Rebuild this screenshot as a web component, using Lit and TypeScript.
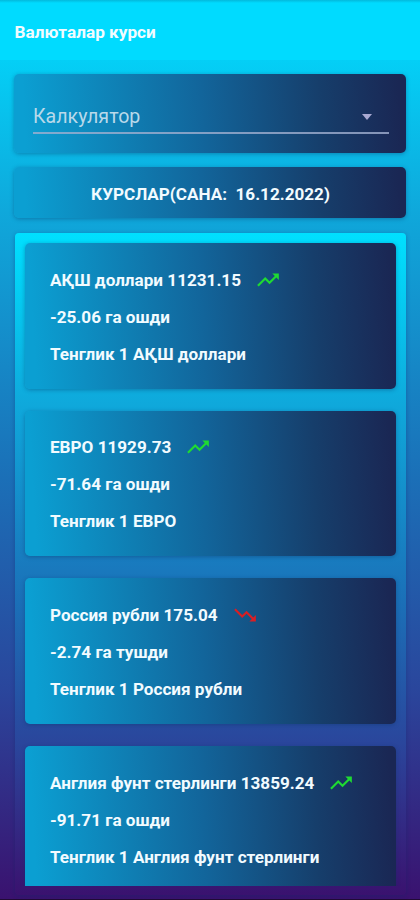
import { LitElement, html, css, svg } from "lit";
import { customElement } from "lit/decorators.js";

interface Rate {
  name: string;
  value: string;
  diff: string;
  up: boolean;
}

const RATES: Rate[] = [
  { name: "АҚШ доллари", value: "11231.15", diff: "-25.06 га ошди", up: true },
  { name: "ЕВРО", value: "11929.73", diff: "-71.64 га ошди", up: true },
  { name: "Россия рубли", value: "175.04", diff: "-2.74 га тушди", up: false },
  { name: "Англия фунт стерлинги", value: "13859.24", diff: "-91.71 га ошди", up: true },
];

const UP = svg`<path d="M16 6l2.29 2.29-4.88 4.88-4-4L2 16.59 3.41 18l6-6 4 4 6.3-6.29L22 12V6z"/>`;
const DOWN = svg`<path d="M16 18l2.29-2.29-4.88-4.88-4 4L2 7.41 3.41 6l6 6 4-4 6.3 6.29L22 12v6z"/>`;

@customElement("app-root")
export class AppRoot extends LitElement {
  static styles = css`
    :host {
      display: flex;
      flex-direction: column;
      box-sizing: border-box;
      height: 900px;
      overflow: hidden;
      font-family: Roboto, "Noto Sans", sans-serif;
      color: #f2fbff;
      background: #341263;
    }
    * { box-sizing: border-box; }
    header {
      flex: none;
      height: 60px;
      padding: 4px 15px 0 14.5px;
      display: flex;
      align-items: center;
      font-size: 17.2px;
      font-weight: 700;
      background: linear-gradient(#03b9dc, #00dbff 3px);
    }
    main {
      flex: 1;
      min-height: 0;
      display: flex;
      flex-direction: column;
      padding: 14px 14px 4px;
      background: linear-gradient(#04cff6, #0fa8db 18%, #1b6fb7 50%, #2a469c 75%, #3a126f);
      border-bottom: 1px solid #210b35;
    }
    .card {
      flex: none;
      border-radius: 5px;
      background: linear-gradient(87deg, #0b9fd2 3%, #12659b 48%, #163e6b 78%, #1a2754 98%);
      box-shadow: 0 1px 4px rgba(10, 50, 100, 0.4);
    }
    .picker { height: 79px; padding: 27px 17px 0 19px; }
    .field {
      display: flex;
      align-items: center;
      justify-content: space-between;
      height: 33px;
      padding: 0 17px 1px 0;
      border-bottom: 2px solid rgba(160, 175, 208, 0.8);
      font-size: 19.6px;
      color: #b9d9ea;
    }
    .caret {
      border: 5px solid transparent;
      border-top: 6px solid #a9a9d2;
      border-bottom: 0;
      margin-top: 2px;
    }
    .date {
      height: 51px;
      margin: 14px 0 15px;
      padding: 2px 0 0 1px;
      display: flex;
      align-items: center;
      justify-content: center;
      font-size: 17.1px;
      font-weight: 700;
      white-space: pre;
    }
    .list {
      flex: 1;
      min-height: 0;
      padding: 10px 10px 9px;
      border-radius: 4px;
      margin: 0 0 0 1px;
      background: linear-gradient(#00e0ff, #0fa8db 26%, #1b6fb7 56%, #2a469c 77%, #3a126f);
      box-shadow: 0 1px 4px rgba(10, 40, 100, 0.35);
    }
    .scroll {
      height: 643px;
      display: flex;
      flex-direction: column;
      gap: 22px;
      clip-path: inset(-6px -6px 0 -6px);
    }
    .rate { height: 145.6px; padding: 18.4px 25px; font-size: 17.12px; font-weight: 700; }
    .row { display: flex; align-items: center; height: 37px; white-space: nowrap; }
    .trend { width: 26px; height: 26px; margin-left: 14px; fill: #1fdb32; }
    .trend.down { fill: #d91f24; }
  `;

  render() {
    return html`
      <header>Валюталар курси</header>
      <main>
        <section class="card picker">
          <div class="field"><span>Калкулятор</span><i class="caret"></i></div>
        </section>
        <section class="card date">КУРСЛАР(САНА:  16.12.2022)</section>
        <section class="list">
          <div class="scroll">
            ${RATES.map(
              (r) => html`<article class="card rate">
                <div class="row">
                  <span>${r.name} ${r.value}</span>
                  <svg class="trend ${r.up ? "" : "down"}" viewBox="0 0 24 24">${r.up ? UP : DOWN}</svg>
                </div>
                <div class="row">${r.diff}</div>
                <div class="row">Тенглик 1 ${r.name}</div>
              </article>`
            )}
          </div>
        </section>
      </main>
    `;
  }
}
